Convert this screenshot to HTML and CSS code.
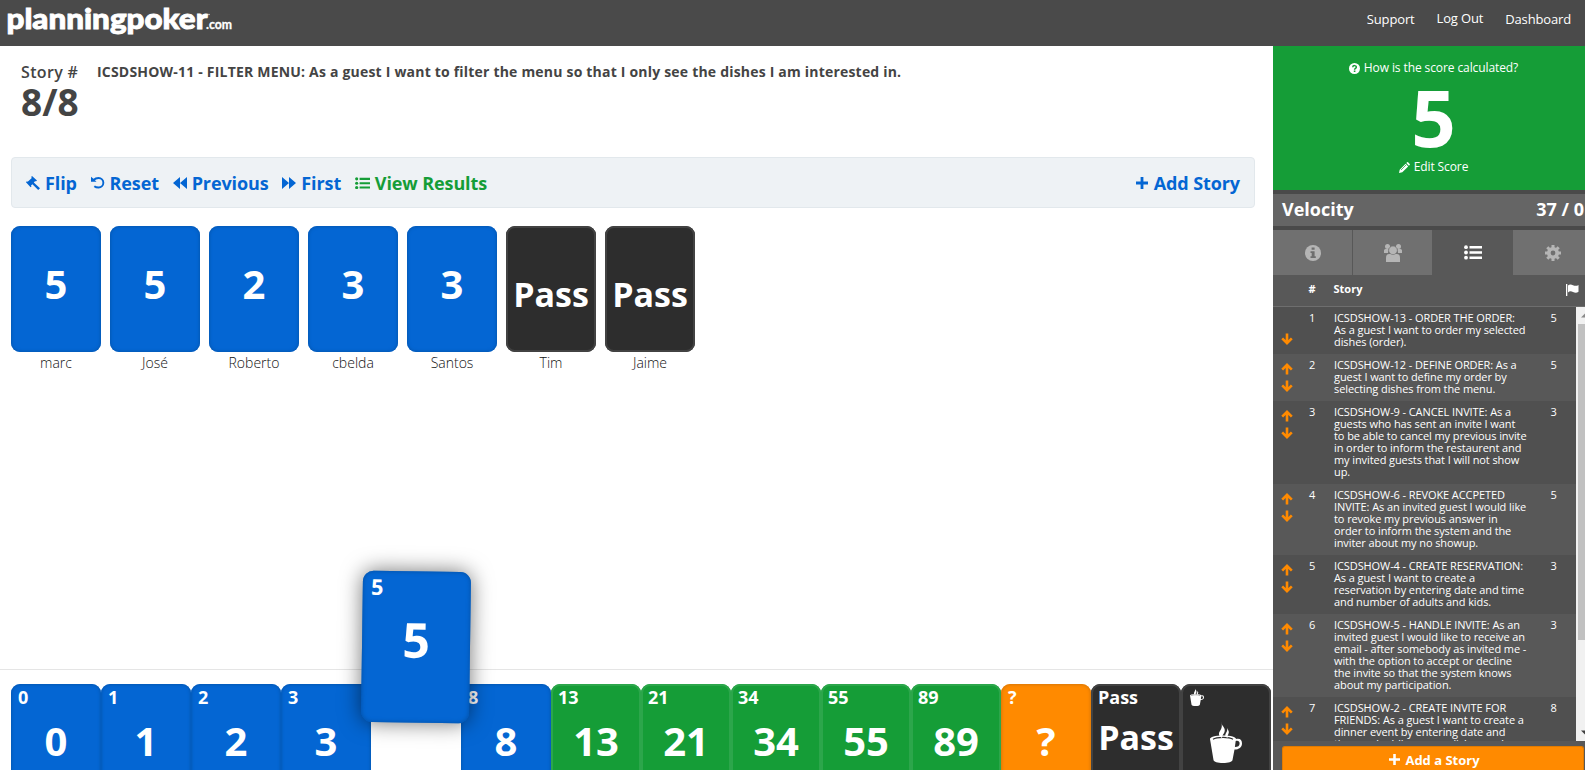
FILE: index.html
```html
<!DOCTYPE html>
<html lang="en">
<head>
<meta charset="utf-8">
<title>planningpoker.com</title>
<link rel="stylesheet" href="styles.css">
</head>
<body>
<svg class="sprite" aria-hidden="true">
  <symbol id="up" viewBox="0 0 12 12"><path d="M6 1.600V11.500M1.200 6.600L6 1.900L10.800 6.600" fill="none" stroke="currentColor" stroke-width="2.600"/></symbol>
  <symbol id="down" viewBox="0 0 12 12"><path d="M6 .5V10.400M1.200 5.400L6 10.100L10.800 5.400" fill="none" stroke="currentColor" stroke-width="2.600"/></symbol>
  <symbol id="gavel" viewBox="0 0 14 14"><path d="M6 0l5 4.600-1.200.8-.6-.4-1.400 1.500L14 12.200 12.200 14 6.400 8.300 5 9.500l.5.7-.9 1L0 6.300l.9-1 .8.500L5.800 1.900 5.200 1z" fill="currentColor"/></symbol>
  <symbol id="reset" viewBox="0 0 14 14"><path d="M2.500 4C4.200 2.400 6 2 7.600 2a4.700 4.700 0 0 1 0 9.500c-1.700 0-3 -.3-4.300-1.300" fill="none" stroke="currentColor" stroke-width="1.900"/><path d="M0 .8l1.900 1.400L5.500 5.700H0z" fill="currentColor"/></symbol>
  <symbol id="back" viewBox="0 0 14 12"><path d="M7 0v12L0 6zM14 0v12L7 6z" fill="currentColor"/></symbol>
  <symbol id="fwd" viewBox="0 0 14 12"><path d="M0 0v12l7-6zM7 0v12l7-6z" fill="currentColor"/></symbol>
  <symbol id="list" viewBox="0 0 18 15"><path d="M5.500 1h12.500v2.500H5.500zM5.500 6.200h12.500v2.500H5.500zM5.500 11.400h12.500v2.500H5.500z" fill="currentColor"/><circle cx="2" cy="2.200" r="1.900" fill="currentColor"/><circle cx="2" cy="7.500" r="1.900" fill="currentColor"/><circle cx="2" cy="12.700" r="1.900" fill="currentColor"/></symbol>
  <symbol id="plus" viewBox="0 0 12 12"><path d="M4.600 0h2.800v4.600H12v2.800H7.400V12H4.600V7.400H0V4.600h4.600z" fill="currentColor"/></symbol>
  <symbol id="cup" viewBox="0 0 32 41"><path d="M0 17c0-2 5-3.600 13-3.600S26 15 26 17c4-1 6 1 6 4.200 0 4-3 6.300-7.500 6.300L22.500 38c-.4 2-4 3-9.500 3s-9-1-9.500-3zM25.700 19l-.8 6c3 0 4.700-1.400 4.700-3.600 0-2-1.400-3-3.900-2.400z" fill="currentColor" fill-rule="evenodd"/><path d="M3 17.200c2-1.400 5-1.900 10-1.900s8 .5 10 1.900" fill="none" stroke="#2d2d2d" stroke-width="1.200"/><path d="M11 0c.4 4 5 5.500 3.500 10-.8 2.500-2.500 3-2.500 6-3-1.800-4-4-2-7 1.800-3 2.500-5 1-9z" fill="currentColor"/><path d="M17 6c1.800 3 2.500 4 1.200 6.500-.8 1.500-.8 2-.6 3.500-2.400-1-3-3-1.600-5C17.200 9.300 17.500 8 17 6z" fill="currentColor"/></symbol>
</svg>
<header class="top">
  <svg class="logo" width="240" height="46" viewBox="0 0 240 46"><text x="6.500" y="28.800" class="logo-main" textLength="201" lengthAdjust="spacingAndGlyphs">planningpoker</text><text x="206" y="28.500" class="logo-com" textLength="26" lengthAdjust="spacingAndGlyphs">.com</text><circle cx="209" cy="14.500" r=".8" fill="#ccc"/></svg>
  <nav class="nav"><a>Support</a><a class="logout">Log Out</a><a>Dashboard</a></nav>
</header>
<div class="body">
  <main class="main">
    <section class="story">
      <div class="count"><div class="label">Story #</div><div class="num">8/8</div></div>
      <h1 class="title">ICSDSHOW-11 - FILTER MENU: As a guest I want to filter the menu so that I only see the dishes I am interested in.</h1>
    </section>
    <div class="toolbar">
      <a class="tool t-flip"><svg width="14" height="14"><use href="#gavel"/></svg>Flip</a>
      <a class="tool t-reset"><svg width="14" height="14"><use href="#reset"/></svg>Reset</a>
      <a class="tool t-prev"><svg width="14" height="12"><use href="#back"/></svg>Previous</a>
      <a class="tool t-first"><svg width="14" height="12"><use href="#fwd"/></svg>First</a>
      <a class="tool t-results"><svg width="15" height="12.500"><use href="#list"/></svg>View Results</a>
      <a class="tool t-add"><svg width="12" height="12"><use href="#plus"/></svg>Add Story</a>
    </div>
    <section class="players">
      <div class="player"><div class="card blue"><b>5</b></div><span>marc</span></div>
      <div class="player"><div class="card blue"><b>5</b></div><span>José</span></div>
      <div class="player"><div class="card blue"><b>2</b></div><span>Roberto</span></div>
      <div class="player"><div class="card blue"><b>3</b></div><span>cbelda</span></div>
      <div class="player"><div class="card blue"><b>3</b></div><span>Santos</span></div>
      <div class="player"><div class="card black"><b class="pass">Pass</b></div><span>Tim</span></div>
      <div class="player"><div class="card black"><b class="pass">Pass</b></div><span>Jaime</span></div>
    </section>
    <section class="hand">
      <div class="card blue"><i>0</i><b>0</b></div>
      <div class="card blue"><i>1</i><b>1</b></div>
      <div class="card blue"><i>2</i><b>2</b></div>
      <div class="card blue"><i>3</i><b>3</b></div>
      <div class="card blue picked"><i>5</i><b>5</b></div>
      <div class="card blue"><i>8</i><b>8</b></div>
      <div class="card green"><i>13</i><b>13</b></div>
      <div class="card green"><i>21</i><b>21</b></div>
      <div class="card green"><i>34</i><b>34</b></div>
      <div class="card green"><i>55</i><b>55</b></div>
      <div class="card green"><i>89</i><b>89</b></div>
      <div class="card orange"><i>?</i><b>?</b></div>
      <div class="card black"><i>Pass</i><b class="pass">Pass</b></div>
      <div class="card black"><svg class="cup-s" width="14" height="18"><use href="#cup"/></svg><svg class="cup-l" width="32" height="41"><use href="#cup"/></svg></div>
    </section>
  </main>
  <aside class="side">
    <div class="score">
      <a class="how"><svg width="11" height="11" viewBox="0 0 11 11"><circle cx="5.500" cy="5.500" r="5.500" fill="#fff"/><path d="M3.700 4.200c.2-2.200 3.700-2 3.600 0 0 1.300-1.700 1.200-1.700 2.500" fill="none" stroke="#159d37" stroke-width="1.500"/><path d="M4.800 7.500h1.600V9H4.800z" fill="#159d37"/></svg>How is the score calculated?</a>
      <div class="big">5</div>
      <a class="edit"><svg width="11" height="11" viewBox="0 0 11 11"><path d="M0 11l.7-3.300L6.600 1.800l2.600 2.600-5.900 5.900zM7.300 1.100L8.100.3q.5-.5 1 0l1.600 1.600q.5.500 0 1l-.8.800z" fill="#fff"/><path d="M2 8L7 3" stroke="#159d37" stroke-width=".7"/></svg>Edit Score</a>
    </div>
    <div class="velocity"><span>Velocity</span><span>37 / 0</span></div>
    <div class="tabs">
      <div class="tab"><svg width="16" height="16" viewBox="0 0 16 16"><circle cx="8" cy="8" r="8" fill="#b5b5b5"/><path d="M6.600 2.500h3v2.300h-3zM5.500 6.200h4.100v5h1.200V13H5.500v-1.800h1.200V8H5.500z" fill="#6e6e6e"/></svg></div>
      <div class="tab"><svg width="18" height="18" viewBox="0 0 18 18" fill="#b5b5b5"><circle cx="3.500" cy="2.500" r="2.500"/><circle cx="14.500" cy="2.500" r="2.500"/><path d="M0 9V6.500Q0 5 1.500 5h3L4 9zM18 9V6.500Q18 5 16.500 5h-3l.5 4zM2 18v-4q0-4 3-4h8q3 0 3 4v4z"/><circle cx="9" cy="6.300" r="4.300" stroke="#6e6e6e" stroke-width=".6"/></svg></div>
      <div class="tab on"><svg width="18" height="15"><use href="#list"/></svg></div>
      <div class="tab"><svg width="16" height="16" viewBox="0 0 16 16" fill="none" stroke="#b5b5b5"><circle cx="8" cy="8" r="4.200" stroke-width="3.600"/><path d="M8 0v3M8 13v3M0 8h3M13 8h3M2.300 2.300l2.200 2.200M11.500 11.500l2.200 2.200M2.300 13.700l2.200-2.200M11.500 4.500l2.200-2.200" stroke-width="3"/></svg></div>
    </div>
    <div class="thead"><span>#</span><span>Story</span><svg width="13" height="12" viewBox="0 0 13 12"><path d="M0 0h1.300v12H0zM2 1.500Q4-.2 7 1.200T12.500 1v6.800Q10 9.500 7 8T2 8.500z" fill="#fff"/></svg></div>
    <div class="list">
      <div class="rows">
        <div class="row"><div class="arrows"><svg class="ghost" width="12" height="12"></svg><svg width="12" height="12"><use href="#down"/></svg></div><span>1</span><p>ICSDSHOW-13 - ORDER THE ORDER:<br>As a guest I want to order my selected<br>dishes (order).</p><span>5</span></div>
        <div class="row"><div class="arrows"><svg width="12" height="12"><use href="#up"/></svg><svg width="12" height="12"><use href="#down"/></svg></div><span>2</span><p>ICSDSHOW-12 - DEFINE ORDER: As a<br>guest I want to define my order by<br>selecting dishes from the menu.</p><span>5</span></div>
        <div class="row"><div class="arrows"><svg width="12" height="12"><use href="#up"/></svg><svg width="12" height="12"><use href="#down"/></svg></div><span>3</span><p>ICSDSHOW-9 - CANCEL INVITE: As a<br>guests who has sent an invite I want<br>to be able to cancel my previous invite<br>in order to inform the restaurent and<br>my invited guests that I will not show<br>up.</p><span>3</span></div>
        <div class="row"><div class="arrows"><svg width="12" height="12"><use href="#up"/></svg><svg width="12" height="12"><use href="#down"/></svg></div><span>4</span><p>ICSDSHOW-6 - REVOKE ACCPETED<br>INVITE: As an invited guest I would like<br>to revoke my previous answer in<br>order to inform the system and the<br>inviter about my no showup.</p><span>5</span></div>
        <div class="row"><div class="arrows"><svg width="12" height="12"><use href="#up"/></svg><svg width="12" height="12"><use href="#down"/></svg></div><span>5</span><p>ICSDSHOW-4 - CREATE RESERVATION:<br>As a guest I want to create a<br>reservation by entering date and time<br>and number of adults and kids.</p><span>3</span></div>
        <div class="row"><div class="arrows"><svg width="12" height="12"><use href="#up"/></svg><svg width="12" height="12"><use href="#down"/></svg></div><span>6</span><p>ICSDSHOW-5 - HANDLE INVITE: As an<br>invited guest I would like to receive an<br>email - after somebody as invited me -<br>with the option to accept or decline<br>the invite so that the system knows<br>about my participation.</p><span>3</span></div>
        <div class="row"><div class="arrows"><svg width="12" height="12"><use href="#up"/></svg><svg width="12" height="12"><use href="#down"/></svg></div><span>7</span><p>ICSDSHOW-2 - CREATE INVITE FOR<br>FRIENDS: As a guest I want to create a<br>dinner event by entering date and<br>time and adding some dishes and</p><span>8</span></div>
      </div>
      <div class="scroll"><svg class="sb" width="17" height="17"><path d="M5 10.500h8L9 6.500z" fill="#8a8a8a"/></svg><div class="thumb"></div><svg class="sb end" width="17" height="17"><path d="M5 6.500h8L9 10.500z" fill="#404040"/></svg></div>
    </div>
    <div class="foot"><a class="addbtn"><svg width="11" height="11"><use href="#plus"/></svg>Add a Story</a></div>
  </aside>
</div>
</body>
</html>
```
FILE: styles.css
```css
* { box-sizing: border-box; }
body { margin: 0; width: 1585px; height: 770px; overflow: hidden; background: #fff; color: #444; font-family: "Open Sans", sans-serif; font-size: 14px; }
.sprite { display: none; }
svg { flex: none; display: block; }
.top { height: 46px; background: #4a4a4a; display: flex; justify-content: space-between; }
.logo-main { font: 900 29px Lato, sans-serif; fill: #fff; stroke: #fff; stroke-width: .9px; }
.logo-com { font: 700 13px Lato, sans-serif; fill: #fff; stroke: #fff; stroke-width: .3px; }
.nav { display: flex; gap: 22px; padding: 10px 14px 0 0; color: #fff; font-size: 13px; line-height: 18px; letter-spacing: -.15px; }
.logout { margin-top: -1px; }
.body { display: flex; height: 724px; overflow: hidden; }
.main { width: 1273px; display: flex; flex-direction: column; }
.story { height: 111px; padding: 15px 0 0 21px; display: flex; }
.count { width: 76px; font-weight: 600; }
.label { font-size: 16px; line-height: 22px; white-space: nowrap; letter-spacing: .35px; }
.num { font-size: 37px; line-height: 38px; font-weight: 700; white-space: nowrap; }
.title { margin: 0; font-size: 14px; line-height: 22px; font-weight: 700; white-space: nowrap; letter-spacing: .2px; }
.toolbar { margin: 0 18px 0 11px; height: 51px; background: #eef2f5; border: 1px solid #e2e8ec; border-radius: 4px; display: flex; align-items: center; padding: 1px 14px 0; color: #0466d3; font-size: 18px; font-weight: 700; line-height: 25px; letter-spacing: -.1px; }
.tool { display: flex; align-items: center; gap: 5px; margin-right: 13.700px; white-space: nowrap; }
.t-results { color: #159d37; }
.t-add { margin: 0 0 0 auto; gap: 6px; }
.players { display: flex; gap: 9px; padding: 18px 0 0 11px; flex: 1; }
.player { width: 90px; text-align: center; font-size: 14px; line-height: 20px; font-weight: 300; color: #111; }
.player span { display: block; margin-top: 1px; }
.card { width: 90px; height: 126px; border-radius: 9px; color: #fff; position: relative; flex: none; text-align: center; }
.card b { display: block; font-size: 40px; line-height: 54px; padding-top: 31px; font-weight: 700; }
.card i { position: absolute; left: 7px; top: 3px; font: 700 18px/20px "Open Sans", sans-serif; }
.card b.pass { font-size: 34px; padding-top: 41px; }
.blue { background: #0466d3; box-shadow: inset 0 0 3px 1px #0458b4; }
.green { background: #159d37; box-shadow: inset 0 0 0 2px #2ca64b; }
.orange { background: #ff8a00; box-shadow: inset 0 0 3px 1px #d97808; }
.black { background: #2d2d2d; box-shadow: inset 0 0 0 2px #424242; }
.hand { height: 101px; border-top: 1px solid #e5e5e5; padding: 14px 0 0 11px; display: flex; }
.hand .card b { padding-top: 30px; }
.hand .card b.pass { padding-top: 26px; }
.hand .card.picked { transform: translateY(-100px) rotate(.8deg) scale(1.2); z-index: 3; box-shadow: inset 0 0 3px 1px #0458b4, 0 0 18px rgba(0,0,0,.55); }
.cup-s { margin: 4px 0 0 9px; }
.cup-l { margin: 16px 0 0 29px; }
.side { width: 312px; background: #4a4a4a; color: #fff; display: flex; flex-direction: column; overflow: hidden; }
.side > div { flex: none; }
.score { height: 144px; background: #159d37; text-align: center; padding: 13px 0 0 9px; font-size: 12px; }
.how, .edit { display: flex; justify-content: center; align-items: center; gap: 4px; line-height: 18px; font-size: 12px; letter-spacing: -.1px; }
.big { font-size: 78px; line-height: 80px; height: 81px; font-weight: 700; }
.velocity { height: 32px; margin: 4px 0; background: #656565; display: flex; justify-content: space-between; align-items: center; padding: 0 1px 2px 9px; font-size: 18px; font-weight: 700; }
.tabs { height: 45px; display: flex; background: #585858; }
.tab { width: 79px; margin-right: 1px; background: #707070; display: flex; align-items: center; justify-content: center; flex: none; }
.tab.on { background: #585858; }
.thead { height: 32px; background: #585858; border-bottom: 1px solid #6e6e6e; display: grid; grid-template-columns: 25px 208px 13px; padding: 0 0 4px 35.500px; align-items: center; font-size: 11px; font-weight: 700; }
.thead svg { margin: 2px 0 0 24px; }
.list { height: 434px; display: flex; overflow: hidden; }
.rows { width: 303px; flex: none; }
.row { display: grid; grid-template-columns: 35px 26px 204px 31px; background: #505050; padding: 5px 0 6px; font-size: 11px; line-height: 12px; letter-spacing: -.09px; }
.row:nth-child(even) { background: #585858; }
.row span { text-align: center; }
.row span:nth-child(2) { text-align: left; padding-left: 1px; }
.row p { margin: 0; white-space: nowrap; }
.arrows { padding: 3.500px 0 0 7.500px; display: flex; flex-direction: column; gap: 5.500px; color: #ff8a00; height: 34px; }
.scroll { width: 17px; flex: none; background: #f1f1f1; display: flex; flex-direction: column; }
.thumb { height: 316px; margin-left: 2px; background: #c1c1c1; }
.end { margin-top: auto; }
.side .foot { flex: 1; background: #585858; padding: 5px 1px 0 9px; }
.addbtn { display: flex; height: 24px; border: 1px solid #e27b00; border-bottom: 0; border-radius: 3px 3px 0 0; background: #ff8a00; justify-content: center; gap: 5px; padding: 4px 0 0 3px; font-size: 13px; line-height: 18px; font-weight: 700; }
.addbtn svg { margin-top: 3px; }
```
